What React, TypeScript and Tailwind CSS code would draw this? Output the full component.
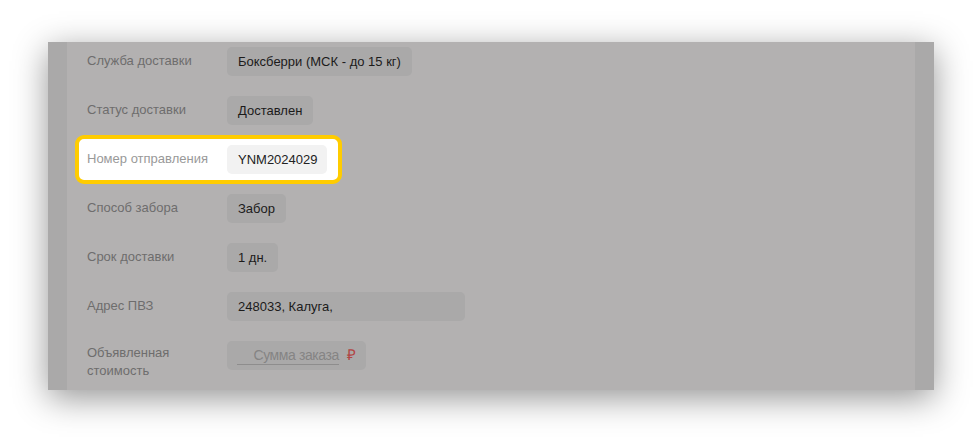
const rows = [
  { label: 'Служба доставки', value: 'Боксберри (МСК - до 15 кг)' },
  { label: 'Статус доставки', value: 'Доставлен' },
]

const rowsAfter = [
  { label: 'Способ забора', value: 'Забор' },
  { label: 'Срок доставки', value: '1 дн.' },
]

function Row({ label, value }: { label: string; value: string }) {
  return (
    <div className="flex items-start">
      <div className="w-[140px] pt-[5px] text-[13px] leading-[18px] text-[#6e6d6d]">{label}</div>
      <div className="h-[29px] px-[11px] flex items-center rounded-[5px] bg-[#aaa9a9] text-[13px] text-[#1c1b1b]">
        {value}
      </div>
    </div>
  )
}

export default function App() {
  return (
    <div
      className="w-[978px] h-[439px] bg-white overflow-hidden pt-[42px] pl-[48px]"
      style={{ fontFamily: '"Liberation Sans", Arial, sans-serif' }}
    >
      <div className="w-[886px] h-[348px] flex shadow-[0_8px_32px_rgba(0,0,0,0.42)]">
        <div className="w-[19px] bg-[#aaa9a9]" />
        <div className="flex-1 bg-[#b3b1b1] pl-[20px] pt-[5px] flex flex-col gap-[20px]">
          {rows.map((r) => (
            <Row key={r.label} {...r} />
          ))}

          <div className="-my-[10px] -ml-[12px] w-fit flex items-start bg-white border-4 border-[#ffcc00] rounded-[9px] pl-[8px] pr-[11px] py-[6px]">
            <div className="w-[140px] pt-[5px] text-[13px] leading-[18px] text-[#999999]">Номер отправления</div>
            <div className="h-[29px] pl-[11px] pr-[9px] flex items-center rounded-[5px] bg-[#f2f2f2] text-[13px] text-[#222222]">
              YNM2024029
            </div>
          </div>

          {rowsAfter.map((r) => (
            <Row key={r.label} {...r} />
          ))}

          <div className="flex items-start">
            <div className="w-[140px] pt-[5px] text-[13px] leading-[18px] text-[#6e6d6d]">Адрес ПВЗ</div>
            <div className="w-[238px] h-[29px] px-[11px] flex items-center rounded-[5px] bg-[#aaa9a9] text-[13px] text-[#1c1b1b]">
              248033, Калуга,
            </div>
          </div>

          <div className="flex items-start">
            <div className="w-[120px] mr-[20px] pt-[3px] text-[13px] leading-[18px] text-[#6e6d6d]">
              Объявленная стоимость
            </div>
            <div className="w-[139px] h-[29px] pl-[10px] flex items-center rounded-[5px] bg-[#aaa9a9]">
              <div className="w-[102px] text-right text-[14px] text-[#858484] border-b border-[#8e8d8d] leading-[17px] tracking-[-0.4px]">
                Сумма заказа
              </div>
              <span className="ml-[8px] text-[15px] text-[#b24545]">₽</span>
            </div>
          </div>
        </div>
        <div className="w-[19px] bg-[#aaa9a9]" />
      </div>
    </div>
  )
}
